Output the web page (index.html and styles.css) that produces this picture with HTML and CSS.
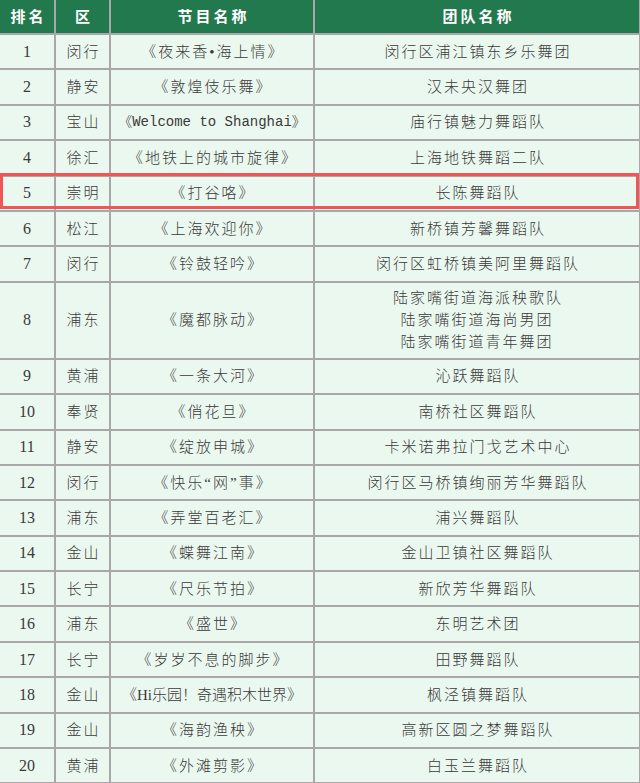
FILE: index.html
```html
<!DOCTYPE html>
<html lang="zh">
<head>
<meta charset="utf-8">
<link rel="stylesheet" href="styles.css">
</head>
<body>
<div class="wrap">
<table class="rank">
<colgroup><col class="c1"><col class="c2"><col class="c3"><col class="c4"></colgroup>
<thead>
<tr><th>排名</th><th>区</th><th>节目名称</th><th>团队名称</th></tr>
</thead>
<tbody>
<tr><td class="num">1</td><td>闵行</td><td>《夜来香•海上情》</td><td>闵行区浦江镇东乡乐舞团</td></tr>
<tr><td class="num">2</td><td>静安</td><td>《敦煌伎乐舞》</td><td>汉未央汉舞团</td></tr>
<tr><td class="num">3</td><td>宝山</td><td class="mono">《Welcome to Shanghai》</td><td>庙行镇魅力舞蹈队</td></tr>
<tr><td class="num">4</td><td>徐汇</td><td>《地铁上的城市旋律》</td><td>上海地铁舞蹈二队</td></tr>
<tr><td class="num">5</td><td>崇明</td><td>《打谷咯》</td><td>长陈舞蹈队</td></tr>
<tr><td class="num">6</td><td>松江</td><td>《上海欢迎你》</td><td>新桥镇芳馨舞蹈队</td></tr>
<tr><td class="num">7</td><td>闵行</td><td>《铃鼓轻吟》</td><td>闵行区虹桥镇美阿里舞蹈队</td></tr>
<tr class="tall"><td class="num">8</td><td>浦东</td><td>《魔都脉动》</td><td class="multi">陆家嘴街道海派秧歌队<br>陆家嘴街道海尚男团<br>陆家嘴街道青年舞团</td></tr>
<tr><td class="num">9</td><td>黄浦</td><td>《一条大河》</td><td>沁跃舞蹈队</td></tr>
<tr><td class="num">10</td><td>奉贤</td><td>《俏花旦》</td><td>南桥社区舞蹈队</td></tr>
<tr><td class="num">11</td><td>静安</td><td>《绽放申城》</td><td>卡米诺弗拉门戈艺术中心</td></tr>
<tr><td class="num">12</td><td>闵行</td><td>《快乐“网”事》</td><td>闵行区马桥镇绚丽芳华舞蹈队</td></tr>
<tr><td class="num">13</td><td>浦东</td><td>《弄堂百老汇》</td><td>浦兴舞蹈队</td></tr>
<tr><td class="num">14</td><td>金山</td><td>《蝶舞江南》</td><td>金山卫镇社区舞蹈队</td></tr>
<tr><td class="num">15</td><td>长宁</td><td>《尺乐节拍》</td><td>新欣芳华舞蹈队</td></tr>
<tr><td class="num">16</td><td>浦东</td><td>《盛世》</td><td>东明艺术团</td></tr>
<tr><td class="num">17</td><td>长宁</td><td>《岁岁不息的脚步》</td><td>田野舞蹈队</td></tr>
<tr><td class="num">18</td><td>金山</td><td class="tight">《Hi乐园！奇遇积木世界》</td><td>枫泾镇舞蹈队</td></tr>
<tr><td class="num">19</td><td>金山</td><td>《海韵渔秧》</td><td>高新区圆之梦舞蹈队</td></tr>
<tr><td class="num">20</td><td>黄浦</td><td>《外滩剪影》</td><td>白玉兰舞蹈队</td></tr>
</tbody>
</table>
<div class="highlight"></div>
</div>
</body>
</html>
```
FILE: styles.css
```css
html, body {
  margin: 0;
  padding: 0;
  background: #ebf8ef;
}
.wrap {
  position: relative;
  width: 640px;
}
.rank {
  width: 640px;
  border-collapse: collapse;
  table-layout: fixed;
  font-family: "Liberation Serif", "Noto Sans CJK SC", serif;
  font-size: 15px;
  line-height: 18px;
  color: #3a3a3a;
}
.c1 { width: 55px; }
.c2 { width: 55px; }
.c3 { width: 204px; }
.c4 { width: 326px; }
.rank thead tr { height: 34px; }
.rank tbody tr { height: 35.4px; }
.rank tbody tr.tall { height: 77px; }
.rank th {
  background: #23794e;
  color: #ffffff;
  font-weight: bold;
  padding: 0;
  letter-spacing: 3px;
  text-indent: 3px;
  border: 2px solid #a8a8a8;
  border-top: none;
  font-size: 15px;
}
.rank td {
  background: #ebf8ef;
  text-align: center;
  padding: 0;
  border: 2px solid #a8a8a8;
  letter-spacing: 2px;
  text-indent: 2px;
  font-weight: 300;
}
.rank td.num {
  font-size: 16px;
  letter-spacing: 0;
  text-indent: 0;
  font-weight: normal;
}
.rank td.mono {
  font-family: "Liberation Mono", "Noto Sans CJK SC", monospace;
  letter-spacing: 0;
  text-indent: 0;
  font-size: 14px;
}
.rank td.tight {
  letter-spacing: 0;
  text-indent: 0;
}
.rank td.multi {
  line-height: 22px;
}
.rank tr td:first-child, .rank tr th:first-child { border-left: none; }
.highlight {
  position: absolute;
  left: 0;
  top: 173px;
  width: 639px;
  height: 36px;
  box-sizing: border-box;
  border: 3px solid #f25555;
  pointer-events: none;
}
```
